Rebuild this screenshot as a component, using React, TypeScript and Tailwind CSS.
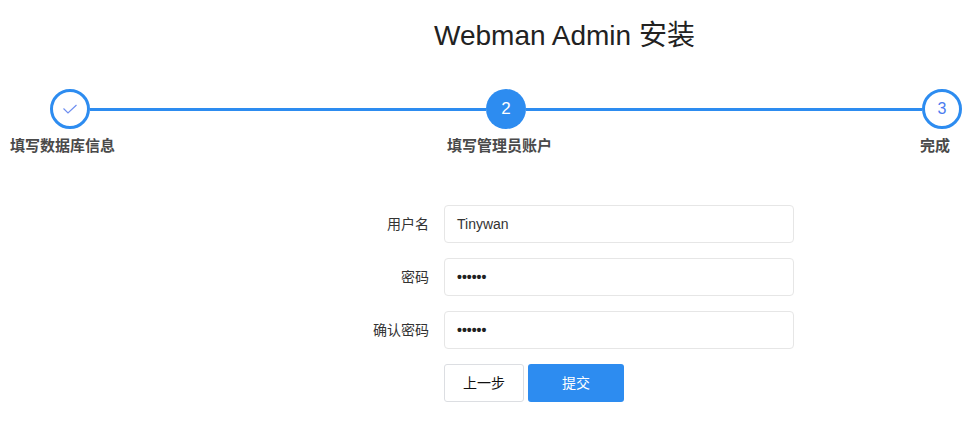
import React from "react";

const font = { fontFamily: '"Liberation Sans", Arial, "Noto Sans CJK SC", sans-serif' };

function Field({ label, value, type }: { label: string; value: string; type: string }) {
  return (
    <div className="flex items-center">
      <div className="w-[429px] text-right text-[14px] text-[#333]">{label}</div>
      <div className="ml-[15px] flex h-[38px] w-[350px] items-center rounded-[4px] border border-[#e6e6e6] bg-white pl-[12px] text-[14px] text-[#333]">
        {type === "password" ? (
          <span className="text-[14px] font-bold text-[#222]">••••••</span>
        ) : (
          value
        )}
      </div>
    </div>
  );
}

export default function App() {
  return (
    <div className="h-[424px] w-[973px] bg-white" style={font}>
      <div className="pt-[18px] pl-[434px] text-[28px] leading-[36px] text-[#222]">Webman Admin 安装</div>

      <div className="mt-[35px] flex items-center pl-[50px] pr-[11px]">
        <div className="flex h-[40px] w-[40px] items-center justify-center rounded-full border-[3px] border-[#2d8cf0] bg-white">
          <svg width="16" height="12" viewBox="0 0 16 12">
            <polyline points="1.5,5.5 6,10 14.5,2" fill="none" stroke="#6f8ff0" strokeWidth="1.2" />
          </svg>
        </div>
        <div className="h-[3px] flex-1 bg-[#2d8cf0]" />
        <div className="flex h-[40px] w-[40px] items-center justify-center rounded-full bg-[#2d8cf0] text-[17px] text-white">
          2
        </div>
        <div className="h-[3px] flex-1 bg-[#2d8cf0]" />
        <div className="flex h-[40px] w-[40px] items-center justify-center rounded-full border-[3px] border-[#2d8cf0] bg-white text-[16px] text-[#4b7cf0]">
          3
        </div>
      </div>

      <div className="mt-[7px] flex text-[15px] font-semibold leading-[20px] text-[#4a4a4a]">
        <div className="ml-[10px] w-[105px]">填写数据库信息</div>
        <div className="ml-[332px] w-[105px]">填写管理员账户</div>
        <div className="ml-auto mr-[23px]">完成</div>
      </div>

      <div className="mt-[49px] flex flex-col gap-[15px]">
        <Field label="用户名" value="Tinywan" type="text" />
        <Field label="密码" value="" type="password" />
        <Field label="确认密码" value="" type="password" />
        <div className="ml-[444px] flex gap-[4px]">
          <button className="h-[38px] w-[80px] rounded-[3px] border border-[#dcdee2] bg-white text-[14px] text-[#111]">
            上一步
          </button>
          <button className="h-[38px] w-[96px] rounded-[3px] bg-[#2d8cf0] text-[14px] text-white">提交</button>
        </div>
      </div>
    </div>
  );
}
